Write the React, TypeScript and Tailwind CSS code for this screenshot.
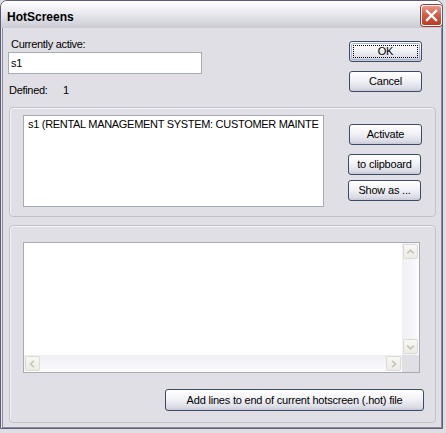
import React from "react";

const font = { fontFamily: '"Liberation Sans", Arial, sans-serif' };

function XPButton({
  label,
  className = "",
  isDefault = false,
}: {
  label: string;
  className?: string;
  isDefault?: boolean;
}) {
  return (
    <div
      className={
        "relative flex items-center justify-center rounded-[3px] border border-[#3d4c66] bg-[linear-gradient(to_bottom,#ffffff,#f4f4f8_40%,#dcdce6_85%,#c8c8d6)] text-[11px] leading-[13px] tracking-[-0.2px] text-black " +
        className
      }
    >
      {isDefault && (
        <div className="pointer-events-none absolute inset-[1px] rounded-[2px] border border-[#aab8d8]" />
      )}
      {isDefault && (
        <div className="pointer-events-none absolute inset-[3px] border border-dotted border-black" />
      )}
      <span className="relative">{label}</span>
    </div>
  );
}

function Chevron({ dir }: { dir: "up" | "down" | "left" | "right" }) {
  const d =
    dir === "up"
      ? "M3.5 8.5 L7 5 L10.5 8.5"
      : dir === "down"
      ? "M3.5 5.5 L7 9 L10.5 5.5"
      : dir === "left"
      ? "M8.5 3.5 L5 7 L8.5 10.5"
      : "M5.5 3.5 L9 7 L5.5 10.5";
  return (
    <div className="flex h-[15px] w-[15px] items-center justify-center rounded-[2px] border border-[#dcdad2] bg-[linear-gradient(to_bottom,#f8f8f4,#ecebe4)]">
      <svg width="14" height="14" viewBox="0 0 14 14">
        <path d={d} fill="none" stroke="#c4c3bc" strokeWidth="1.8" />
      </svg>
    </div>
  );
}

export default function App() {
  return (
    <div className="h-[433px] w-[446px] bg-[#dedee4]" style={font}>
      <div className="flex h-[429px] w-[443px] flex-col overflow-hidden rounded-t-[7px] border border-[#5c5c72] bg-[#e6e6ec]">
        {/* Title bar */}
        <div className="flex h-[27px] shrink-0 items-start bg-[linear-gradient(to_bottom,#ffffff,#ececf1_40%,#d6d6de_80%,#cacad4)]">
          <div className="ml-[6px] mt-[9px] text-[12px] font-bold leading-[14px] text-black">
            HotScreens
          </div>
          <div className="ml-auto mt-[4px] flex h-[21px] w-[21px] items-center justify-center rounded-[3px] border border-white bg-[linear-gradient(to_bottom,#e89a8a,#d0604c_45%,#b83a26)] shadow-[0_0_0_1px_#9a3a30]">
            <svg width="13" height="13" viewBox="0 0 13 13">
              <path d="M2 2 L11 11 M11 2 L2 11" stroke="white" strokeWidth="2.4" strokeLinecap="square" />
            </svg>
          </div>
        </div>

        {/* Body */}
        <div className="flex flex-1 pl-[1px]">
          <div className="flex flex-1 flex-col border-x border-b border-[#8a8aa0] bg-[#e0dfe5] text-[11px] leading-[13px] tracking-[-0.3px] text-black">
            {/* Top row */}
            <div className="flex h-[79px] shrink-0">
              <div className="ml-[5px] flex w-[194px] flex-col pt-[10px]">
                <div className="pl-[3px]">Currently active:</div>
                <div className="mt-[1px] flex h-[22px] items-center border border-[#a5acb5] bg-white pl-[2px]">
                  s1
                </div>
                <div className="mt-[10px] flex pl-[1px]">
                  <span className="w-[54px]">Defined:</span>
                  <span>1</span>
                </div>
              </div>
              <div className="ml-auto mr-[19px] flex flex-col pt-[13px]">
                <XPButton label="OK" isDefault className="h-[21px] w-[73px]" />
                <XPButton label="Cancel" className="mt-[9px] h-[21px] w-[73px]" />
              </div>
            </div>

            {/* Group 1 */}
            <div className="ml-[6px] flex h-[110px] w-[427px] shrink-0 rounded-[4px] border border-[#c2c2ca] shadow-[inset_1px_1px_0_#f4f4f8]">
              <div className="ml-[13px] mt-[7px] h-[92px] w-[301px] overflow-hidden border border-[#a5acb5] bg-white pl-[4px] pt-[2px]">
                <div className="whitespace-nowrap">
                  s1 (RENTAL MANAGEMENT SYSTEM: CUSTOMER MAINTE
                </div>
              </div>
              <div className="ml-[24px] flex flex-col pt-[16px]">
                <XPButton label="Activate" className="ml-[1px] h-[21px] w-[73px]" />
                <XPButton label="to clipboard" className="mt-[9px] h-[21px] w-[73px]" />
                <XPButton label="Show as ..." className="mt-[5px] h-[21px] w-[73px]" />
              </div>
            </div>

            {/* Group 2 */}
            <div className="ml-[6px] mt-[8px] flex h-[198px] w-[427px] shrink-0 flex-col rounded-[4px] border border-[#c2c2ca] shadow-[inset_1px_1px_0_#f4f4f8]">
              <div className="ml-[13px] mt-[16px] grid h-[131px] w-[397px] grid-cols-[1fr_17px] grid-rows-[1fr_17px] border border-[#a5acb5] bg-white">
                <div className="bg-white" />
                <div className="flex flex-col items-center justify-between bg-[linear-gradient(to_right,#eeeef4,#f6f6fa_60%,#fdfdff)] py-[1px]">
                  <Chevron dir="up" />
                  <Chevron dir="down" />
                </div>
                <div className="flex items-center justify-between bg-[linear-gradient(to_bottom,#eeeef4,#f6f6fa_60%,#fdfdff)] px-[1px]">
                  <Chevron dir="left" />
                  <Chevron dir="right" />
                </div>
                <div className="bg-[#e0dfe5]" />
              </div>
              <div className="ml-[155px] mt-[16px]">
                <XPButton
                  label="Add lines to end of current hotscreen (.hot) file"
                  className="h-[22px] w-[259px]"
                />
              </div>
            </div>
          </div>
        </div>
      </div>
    </div>
  );
}
